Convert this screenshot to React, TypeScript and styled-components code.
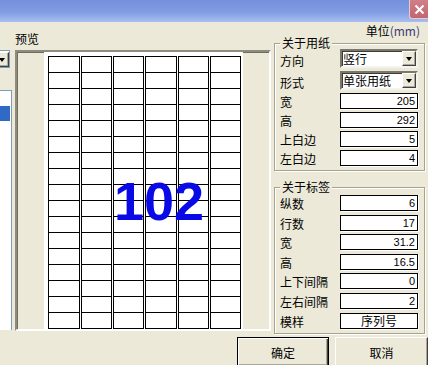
import React from 'react';
import styled, { createGlobalStyle } from 'styled-components';

const GlobalStyle = createGlobalStyle`
  html, body {
    margin: 0;
    padding: 0;
    background: #ece9d8;
  }
  body {
    font-family: 'Noto Sans CJK SC', 'Liberation Sans', sans-serif;
    font-size: 12px;
    color: #000;
  }
`;

const Window = styled.div`
  width: 428px;
  height: 365px;
  overflow: hidden;
  display: flex;
  flex-direction: column;
  background: #ece9d8;
`;

const TitleBar = styled.div`
  flex: none;
  height: 22px;
  display: flex;
  justify-content: flex-end;
  align-items: flex-start;
  background: linear-gradient(to bottom, #7590dc 0%, #819de4 55%, #a6bef0 100%);
`;

const CloseButton = styled.div`
  width: 18px;
  height: 18px;
  display: flex;
  align-items: center;
  justify-content: center;
  background: linear-gradient(to bottom, #d07f87, #c4656f);
  border-left: 1px solid #ecc9cd;
  border-bottom: 1px solid #ecc9cd;
  border-radius: 0 0 0 3px;
`;

const Content = styled.div`
  flex: none;
  height: 315px;
  display: flex;
  align-items: flex-start;
`;

const LeftStrip = styled.div`
  width: 12px;
  display: flex;
  flex-direction: column;
`;

const Combo = styled.div`
  margin-top: 28px;
  width: 10px;
  height: 18px;
  box-sizing: border-box;
  display: flex;
  justify-content: flex-end;
  align-items: center;
  overflow: hidden;
  background: #fff;
  border: 1px solid #7f9db9;
  border-left: none;
`;

const DropButton = styled.div<{ $w?: number }>`
  flex: none;
  width: ${({ $w }) => $w ?? 14}px;
  height: 15px;
  box-sizing: border-box;
  display: flex;
  align-items: center;
  justify-content: center;
  background: #ece9d8;
  border: 1px solid;
  border-color: #fff #404040 #404040 #fff;
  box-shadow: inset -1px -1px 0 #aca899;

  &::after {
    content: '';
    border-left: 3.5px solid transparent;
    border-right: 3.5px solid transparent;
    border-top: 4px solid #000;
    margin-top: 1px;
  }
`;

const List = styled.div`
  margin-top: 22px;
  width: 12px;
  height: 240px;
  box-sizing: border-box;
  background: #fff;
  border-top: 1px solid #7f9db9;
  border-right: 1px solid #7f9db9;
`;

const ListItem = styled.div<{ $selected?: boolean }>`
  width: 10px;
  height: 15px;
  background: ${({ $selected }) => ($selected ? '#316ac5' : 'transparent')};
`;

const PreviewCol = styled.div`
  width: 256px;
  margin-left: 3px;
  display: flex;
  flex-direction: column;
`;

const Caption = styled.div`
  margin-top: 11px;
  height: 12px;
  line-height: 12px;
`;

const Panel = styled.div`
  margin-top: 5px;
  height: 281px;
  box-sizing: border-box;
  padding-left: 27px;
  border: 2px solid;
  border-color: #8e8c7f #fff #fff #8e8c7f;
  box-shadow: inset 1px 1px 0 #6f6d62;
`;

const Sheet = styled.div`
  position: relative;
  width: 199px;
  height: 277px;
  box-sizing: border-box;
  padding: 4px 0 0 4px;
  background: #fff;
`;

const Labels = styled.div`
  display: flex;
  gap: 1px;
`;

const LabelColumn = styled.div<{ $w: number }>`
  width: ${({ $w }) => $w}px;
  box-sizing: border-box;
  border: 1px solid #000;
  display: flex;
  flex-direction: column;
`;

const Cell = styled.div`
  height: 15px;
  border-bottom: 1px solid #000;

  &:last-child {
    border-bottom: none;
  }
`;

const Count = styled.div`
  position: absolute;
  left: 70px;
  top: 122px;
  font-family: 'Liberation Sans', Arial, sans-serif;
  font-weight: bold;
  font-size: 54px;
  line-height: 54px;
  color: #0a0ae6;
`;

const RightCol = styled.div`
  width: 151px;
  margin-left: 3px;
  display: flex;
  flex-direction: column;
`;

const Unit = styled.div`
  padding: 3px 5px 0 0;
  height: 12px;
  line-height: 12px;
  text-align: right;

  span {
    color: #413a72;
  }
`;

const Group = styled.fieldset<{ $gap: number; $top: number; $mt?: number }>`
  margin: ${({ $mt }) => $mt ?? 0}px 0 0 0;
  padding: ${({ $top }) => $top}px 5px 4px 5px;
  min-inline-size: 0;
  border: 1px solid #a5a28e;
  box-shadow: inset 1px 1px 0 #fff, 1px 1px 0 #fff;
  display: flex;
  flex-direction: column;
  gap: ${({ $gap }) => $gap}px;
`;

const Legend = styled.legend`
  padding: 0 2px;
  height: 12px;
  line-height: 12px;
  background: #ece9d8;
`;

const Row = styled.div`
  display: flex;
  align-items: flex-end;
`;

const FieldName = styled.div`
  width: 60px;
  line-height: 12px;
  margin-bottom: 1px;
`;

const Field = styled.div<{ $center?: boolean }>`
  width: 78px;
  height: 16px;
  box-sizing: border-box;
  padding: 0 2px;
  background: #fff;
  border: 1px solid #000;
  box-shadow: 1px 1px 0 #fff;
  text-align: ${({ $center }) => ($center ? 'center' : 'right')};
  font-family: ${({ $center }) =>
    $center ? "'Noto Sans CJK SC', sans-serif" : "'Liberation Sans', Arial, sans-serif"};
  font-size: ${({ $center }) => ($center ? 12 : 11)}px;
  line-height: 14px;
`;

const Select = styled.div`
  width: 78px;
  height: 19px;
  box-sizing: border-box;
  display: flex;
  align-items: center;
  background: #fff;
  border: 2px solid;
  border-color: #7a786c #f4f3ee #f4f3ee #7a786c;
  box-shadow: inset 1px 1px 0 #3c3b35;
`;

const SelectText = styled.div`
  flex: 1;
  padding-left: 1px;
  line-height: 15px;
`;

const Footer = styled.div`
  flex: none;
  display: flex;
  gap: 6px;
  padding-left: 237px;
`;

const Button = styled.div<{ $default?: boolean }>`
  flex: none;
  width: ${({ $default }) => ($default ? 92 : 93)}px;
  height: 30px;
  box-sizing: border-box;
  display: flex;
  align-items: center;
  justify-content: center;
  background: #ece9d8;
  border: 1px solid;
  border-color: ${({ $default }) => ($default ? '#000' : '#fff #404040 #404040 #fff')};
  box-shadow: ${({ $default }) =>
    $default
      ? 'inset 1px 1px 0 #fff, inset -1px -1px 0 #404040, inset -2px -2px 0 #aca899'
      : 'inset -1px -1px 0 #aca899'};
`;

const paper = [
  { name: '方向', value: '竖行', select: true },
  { name: '形式', value: '单张用纸', select: true },
  { name: '宽', value: '205' },
  { name: '高', value: '292' },
  { name: '上白边', value: '5' },
  { name: '左白边', value: '4' },
];

const label = [
  { name: '纵数', value: '6' },
  { name: '行数', value: '17' },
  { name: '宽', value: '31.2' },
  { name: '高', value: '16.5' },
  { name: '上下间隔', value: '0' },
  { name: '左右间隔', value: '2' },
  { name: '模样', value: '序列号', center: true },
];

const columnWidths = [32, 31, 31, 32, 31, 31];
const rows = Array.from({ length: 17 });

const App = () => (
  <Window>
    <GlobalStyle />
    <TitleBar>
      <CloseButton>
        <svg width="11" height="11" viewBox="0 0 11 11">
          <path d="M1.5 1.5 L9.5 9.5 M9.5 1.5 L1.5 9.5" stroke="#fff" strokeWidth="2" />
        </svg>
      </CloseButton>
    </TitleBar>
    <Content>
      <LeftStrip>
        <Combo>
          <DropButton $w={14} />
        </Combo>
        <List>
          <ListItem />
          <ListItem $selected />
        </List>
      </LeftStrip>
      <PreviewCol>
        <Caption>预览</Caption>
        <Panel>
          <Sheet>
            <Labels>
              {columnWidths.map((w, i) => (
                <LabelColumn key={i} $w={w}>
                  {rows.map((_, j) => (
                    <Cell key={j} />
                  ))}
                </LabelColumn>
              ))}
            </Labels>
            <Count>102</Count>
          </Sheet>
        </Panel>
      </PreviewCol>
      <RightCol>
        <Unit>
          单位<span>(mm)</span>
        </Unit>
        <Group $gap={3} $top={0}>
          <Legend>关于用纸</Legend>
          {paper.map((p) => (
            <Row key={p.name}>
              <FieldName>{p.name}</FieldName>
              {p.select ? (
                <Select>
                  <SelectText>{p.value}</SelectText>
                  <DropButton $w={14} />
                </Select>
              ) : (
                <Field>{p.value}</Field>
              )}
            </Row>
          ))}
        </Group>
        <Group $gap={3.6} $top={2} $mt={10}>
          <Legend>关于标签</Legend>
          {label.map((p) => (
            <Row key={p.name}>
              <FieldName>{p.name}</FieldName>
              <Field $center={p.center}>{p.value}</Field>
            </Row>
          ))}
        </Group>
      </RightCol>
    </Content>
    <Footer>
      <Button $default>确定</Button>
      <Button>取消</Button>
    </Footer>
  </Window>
);

export default App;
